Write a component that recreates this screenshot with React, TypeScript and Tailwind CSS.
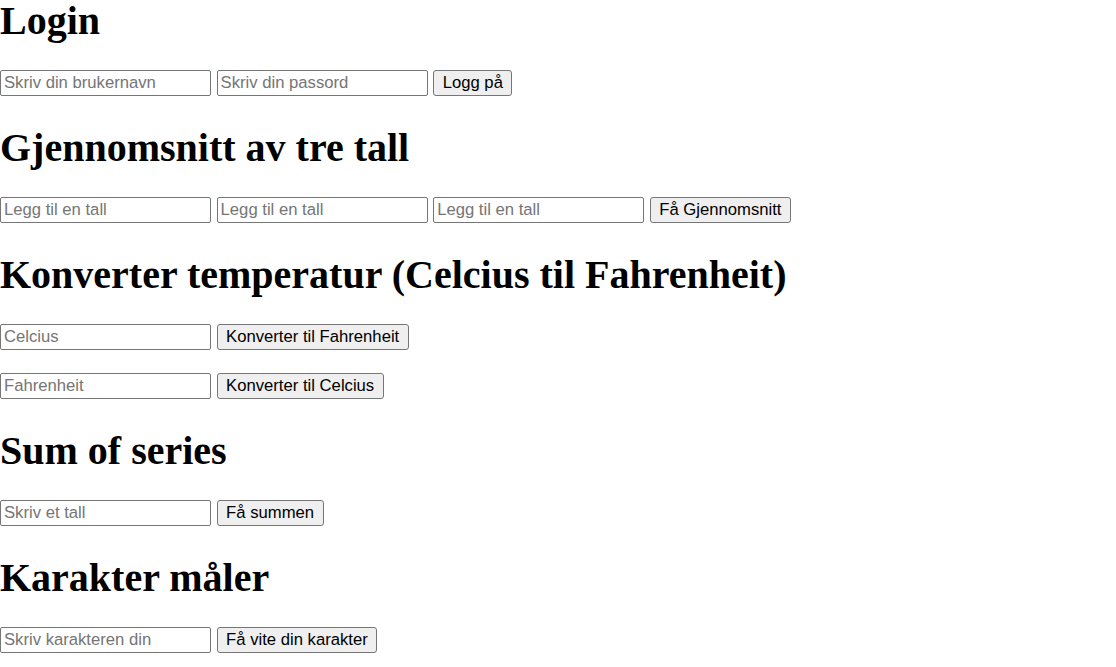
import React from "react";

const inputCls =
  "box-border w-[211px] h-[26px] border border-[#767676] rounded-[2px] px-[3px] py-0 text-[16.67px] text-black bg-white placeholder:text-[#757575] outline-none [font-family:'Liberation_Sans',Arial,sans-serif]";
const btnCls =
  "box-border h-[26px] border border-[#767676] rounded-[3px] bg-[#efefef] px-[8.5px] py-0 text-[16.67px] leading-none text-black [font-family:'Liberation_Sans',Arial,sans-serif] whitespace-nowrap";
const h1Cls =
  "text-[40px] leading-[46px] font-bold text-black [font-family:'Liberation_Serif','Times_New_Roman',serif] mt-[29px] mb-[26px]";

function Row({ children, className = "" }: { children: React.ReactNode; className?: string }) {
  return <div className={`flex gap-[5.6px] items-start ${className}`}>{children}</div>;
}

export default function App() {
  return (
    <div className="w-[1116px] h-[667px] overflow-hidden bg-white">
      <h1 className={`${h1Cls} !mt-[-2px]`}>Login</h1>
      <Row>
        <input className={inputCls} placeholder="Skriv din brukernavn" />
        <input className={inputCls} placeholder="Skriv din passord" type="password" />
        <button className={btnCls}>Logg på</button>
      </Row>

      <h1 className={h1Cls}>Gjennomsnitt av tre tall</h1>
      <Row>
        <input className={inputCls} placeholder="Legg til en tall" />
        <input className={inputCls} placeholder="Legg til en tall" />
        <input className={inputCls} placeholder="Legg til en tall" />
        <button className={btnCls}>Få Gjennomsnitt</button>
      </Row>

      <h1 className={h1Cls}>Konverter temperatur (Celcius til Fahrenheit)</h1>
      <Row>
        <input className={inputCls} placeholder="Celcius" />
        <button className={btnCls}>Konverter til Fahrenheit</button>
      </Row>
      <Row className="mt-[23px]">
        <input className={inputCls} placeholder="Fahrenheit" />
        <button className={btnCls}>Konverter til Celcius</button>
      </Row>

      <h1 className={h1Cls}>Sum of series</h1>
      <Row>
        <input className={inputCls} placeholder="Skriv et tall" />
        <button className={btnCls}>Få summen</button>
      </Row>

      <h1 className={h1Cls}>Karakter måler</h1>
      <Row>
        <input className={inputCls} placeholder="Skriv karakteren din" />
        <button className={btnCls}>Få vite din karakter</button>
      </Row>
    </div>
  );
}
